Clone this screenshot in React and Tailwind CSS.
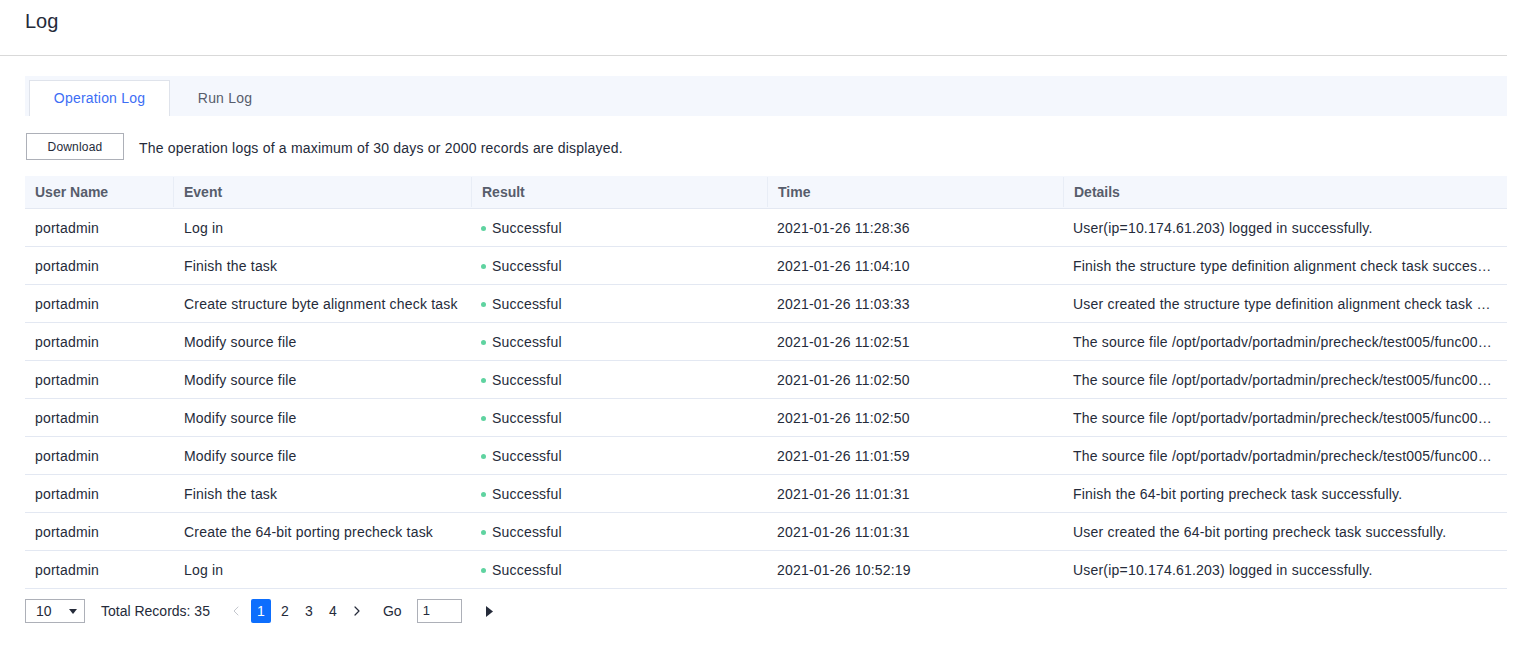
import { ChevronLeft, ChevronRight } from 'lucide-react';

const ROWS = [
  ['Log in', '2021-01-26 11:28:36', 'User(ip=10.174.61.203) logged in successfully.'],
  ['Finish the task', '2021-01-26 11:04:10', 'Finish the structure type definition alignment check task successfully.'],
  ['Create structure byte alignment check task', '2021-01-26 11:03:33', 'User created the structure type definition alignment check task successfully.'],
  ['Modify source file', '2021-01-26 11:02:51', 'The source file /opt/portadv/portadmin/precheck/test005/func001.c is modified.'],
  ['Modify source file', '2021-01-26 11:02:50', 'The source file /opt/portadv/portadmin/precheck/test005/func002.c is modified.'],
  ['Modify source file', '2021-01-26 11:02:50', 'The source file /opt/portadv/portadmin/precheck/test005/func003.c is modified.'],
  ['Modify source file', '2021-01-26 11:01:59', 'The source file /opt/portadv/portadmin/precheck/test005/func004.c is modified.'],
  ['Finish the task', '2021-01-26 11:01:31', 'Finish the 64-bit porting precheck task successfully.'],
  ['Create the 64-bit porting precheck task', '2021-01-26 11:01:31', 'User created the 64-bit porting precheck task successfully.'],
  ['Log in', '2021-01-26 10:52:19', 'User(ip=10.174.61.203) logged in successfully.'],
];

const COLS = 'grid grid-cols-[148px_298px_296px_296px_444px]';

export default function App() {
  return (
    <div className="w-[1514px] h-[660px] bg-white text-[#252b3a] font-['Liberation_Sans',sans-serif] tracking-[0.2px]">
      {/* Header */}
      <div className="h-[56px] mr-[7px] border-b border-[#d9d9d9] pl-[25px] flex items-center">
        <h1 className="text-[20px] leading-none -mt-[14px] tracking-normal">Log</h1>
      </div>

      <div className="pl-[25px] pr-[7px] pt-[20px]">
        {/* Tabs */}
        <div className="h-[40px] bg-[#f4f7fd] flex items-end pl-[4px]">
          <div className="w-[141px] h-[36px] bg-white border border-b-0 border-[#dfe3eb] flex items-center justify-center text-[14px] text-[#3d6ef5]">
            Operation Log
          </div>
          <div className="w-[110px] h-[36px] flex items-center justify-center text-[14px] text-[#575d6c]">
            Run Log
          </div>
        </div>

        {/* Toolbar */}
        <div className="flex items-center mt-[17px] h-[27px]">
          <button className="w-[98px] h-[27px] border border-[#adb0b8] bg-white text-[12px] text-[#252b3a] ml-[1px]">
            Download
          </button>
          <span className="ml-[15px] mt-[3px] text-[14px] text-[#252b3a]">
            The operation logs of a maximum of 30 days or 2000 records are displayed.
          </span>
        </div>

        {/* Table */}
        <div className="mt-[16px] text-[14px]">
          <div className={`${COLS} h-[33px] bg-[#f4f7fd] border-b border-[#e3e8f2] text-[#575d6c] font-bold tracking-normal`}>
            {['User Name', 'Event', 'Result', 'Time', 'Details'].map((h, i) => (
              <div key={h} className={`flex items-center pl-[10px] ${i > 0 ? 'border-l border-[#e8edf6] my-[1px]' : ''}`}>
                {h}
              </div>
            ))}
          </div>
          {ROWS.map((r, i) => (
            <div key={i} className={`${COLS} h-[38px] border-b border-[#e3e8f2] items-center pt-[2px]`}>
              <div className="pl-[10px]">portadmin</div>
              <div className="pl-[11px]">{r[0]}</div>
              <div className="pl-[10px] flex items-center gap-[6px]">
                <span className="w-[5px] h-[5px] rounded-full bg-[#5fd3a0]" />
                Successful
              </div>
              <div className="pl-[10px]">{r[1]}</div>
              <div className="pl-[10px] pr-[12px] truncate">{r[2]}</div>
            </div>
          ))}
        </div>

        {/* Pagination */}
        <div className="flex items-center mt-[10px] h-[24px] text-[14px] tracking-normal">
          <div className="w-[60px] h-[24px] border border-[#adb0b8] flex items-center justify-between pl-[10px] pr-[7px]">
            <span className="text-[#252b3a]">10</span>
            <svg width="8" height="5" viewBox="0 0 8 5"><path d="M0 0h8L4 5z" fill="#252b3a" /></svg>
          </div>
          <span className="ml-[16px] text-[#252b3a]">Total Records: 35</span>
          <ChevronLeft size={16} className="ml-[18px] text-[#c4c7ce]" strokeWidth={1.5} />
          <div className="ml-[7px] w-[20px] h-[24px] rounded-[2px] bg-[#0d6efd] text-white flex items-center justify-center">1</div>
          <span className="ml-[7px] w-[14px] text-center">2</span>
          <span className="ml-[10px] w-[14px] text-center">3</span>
          <span className="ml-[10px] w-[14px] text-center">4</span>
          <ChevronRight size={16} className="ml-[9px] text-[#252b3a]" strokeWidth={1.8} />
          <span className="ml-[18px]">Go</span>
          <div className="ml-[15px] w-[45px] h-[24px] border border-[#adb0b8] flex items-center pl-[5px] text-[13px]">1</div>
          <svg className="ml-[24px]" width="7" height="11" viewBox="0 0 7 11"><path d="M0 0l7 5.5L0 11z" fill="#252b3a" /></svg>
        </div>
      </div>
    </div>
  );
}
